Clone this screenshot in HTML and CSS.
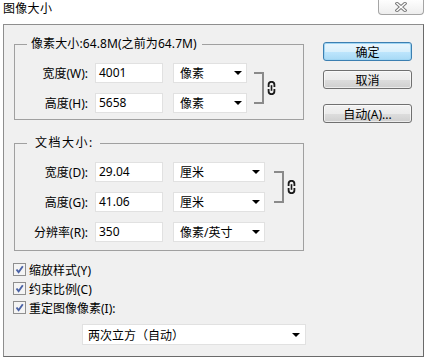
FILE: index.html
```html
<!DOCTYPE html>
<html lang="zh-CN">
<head>
  <meta charset="UTF-8">
  <title>图像大小</title>
  <link rel="stylesheet" href="styles.css">
</head>
<body>
  <div class="dialog">
    <div class="titlebar">
      <span class="title">图像大小</span>
      <span class="close">
        <svg width="12" height="10" viewBox="0 0 12 10">
          <path d="M2 1.5 L10 8.5 M10 1.5 L2 8.5" stroke="#7b7b7b" stroke-width="3.4" stroke-linecap="square"/>
          <path d="M2 1.5 L10 8.5 M10 1.5 L2 8.5" stroke="#fff" stroke-width="1.4" stroke-linecap="square"/>
        </svg>
      </span>
    </div>

    <div class="panel">
      <div class="main">
        <fieldset class="group">
          <legend>像素大小:64.8M(之前为64.7M)</legend>
          <div class="linked">
            <div class="rows">
              <div class="row">
                <label class="lbl">宽度(W):</label>
                <div class="input">4001</div>
                <div class="select">像素<i class="arrow"></i></div>
              </div>
              <div class="row">
                <label class="lbl">高度(H):</label>
                <div class="input">5658</div>
                <div class="select">像素<i class="arrow"></i></div>
              </div>
            </div>
            <div class="bracket"></div>
            <svg class="chain" width="9" height="14" viewBox="0 0 9 14">
              <path d="M1.6 6 V3.7 a2.9 2.9 0 0 1 5.8 0 V6" fill="none" stroke="#1a1a1a" stroke-width="1.8"/>
              <path d="M1.6 8 V10.3 a2.9 2.9 0 0 0 5.8 0 V8" fill="none" stroke="#1a1a1a" stroke-width="1.8"/>
              <path d="M4.5 4.2 V9.8" stroke="#1a1a1a" stroke-width="1.6"/>
            </svg>
          </div>
        </fieldset>

        <fieldset class="group group-doc">
          <legend>文档大小:</legend>
          <div class="linked">
            <div class="rows">
              <div class="row">
                <label class="lbl">宽度(D):</label>
                <div class="input">29.04</div>
                <div class="select">厘米<i class="arrow"></i></div>
              </div>
              <div class="row">
                <label class="lbl">高度(G):</label>
                <div class="input">41.06</div>
                <div class="select">厘米<i class="arrow"></i></div>
              </div>
            </div>
            <div class="bracket"></div>
            <svg class="chain" width="9" height="14" viewBox="0 0 9 14">
              <path d="M1.6 6 V3.7 a2.9 2.9 0 0 1 5.8 0 V6" fill="none" stroke="#1a1a1a" stroke-width="1.8"/>
              <path d="M1.6 8 V10.3 a2.9 2.9 0 0 0 5.8 0 V8" fill="none" stroke="#1a1a1a" stroke-width="1.8"/>
              <path d="M4.5 4.2 V9.8" stroke="#1a1a1a" stroke-width="1.6"/>
            </svg>
          </div>
          <div class="row row-res">
            <label class="lbl">分辨率(R):</label>
            <div class="input">350</div>
            <div class="select">像素/英寸<i class="arrow"></i></div>
          </div>
        </fieldset>

        <div class="checks">
          <div class="check"><span class="box"></span>缩放样式(Y)</div>
          <div class="check"><span class="box"></span>约束比例(C)</div>
          <div class="check"><span class="box"></span>重定图像像素(I):</div>
        </div>

        <div class="select select-wide">两次立方（自动）<i class="arrow"></i></div>
      </div>

      <div class="buttons">
        <button class="btn btn-default">确定</button>
        <button class="btn">取消</button>
        <button class="btn btn-auto">自动(A)...</button>
      </div>
    </div>
  </div>
</body>
</html>
```

FILE: styles.css
```css
* {
  box-sizing: border-box;
}
body {
  margin: 0;
  background: #fff;
  font-family: "Noto Sans", "Noto Sans CJK SC", sans-serif;
  font-size: 12px;
  color: #000;
}
.dialog {
  width: 427px;
  height: 359px;
}

/* title bar */
.titlebar {
  height: 24px;
  display: flex;
  justify-content: space-between;
  align-items: flex-start;
}
.title {
  padding: 1px 0 0 3px;
  line-height: 16px;
  letter-spacing: 0.3px;
}
.close {
  width: 46px;
  height: 15px;
  margin-right: 3px;
  border: 1px solid #a5a5a5;
  border-top: none;
  border-radius: 0 0 4px 4px;
  background: linear-gradient(#fefefe, #eeeeee);
  display: flex;
  align-items: center;
  justify-content: center;
}

/* body of the dialog */
.panel {
  margin: 0 3px;
  height: 333px;
  border: 1px solid #8e8e8e;
  border-right-color: #6a6a6a;
  border-bottom-color: #6a6a6a;
  background: #f0f0f0;
  display: flex;
  padding: 12px 0 0 10px;
}
.main {
  width: 290px;
}

.group {
  margin: 0;
  width: 290px;
  padding: 12px 0 6px 0;
  border: 1px solid #a0a0a0;
}
.group legend {
  margin-left: 12px;
  padding: 0 5px 0 4px;
  line-height: 14px;
  letter-spacing: 0.1px;
}
.group-doc {
  margin-top: 16px;
  padding-bottom: 8px;
}
.group-doc legend {
  padding: 0 6px 0 8px;
  letter-spacing: 1.5px;
}

.linked {
  display: flex;
  align-items: center;
}
.rows {
  display: flex;
  flex-direction: column;
  gap: 10px;
}
.row {
  display: flex;
  align-items: center;
  height: 20px;
}
.row-res {
  margin-top: 10px;
}
.lbl {
  width: 80px;
  text-align: right;
  padding-right: 7px;
}
.input {
  width: 68px;
  height: 20px;
  background: #fff;
  border: 1px solid #e1e1e1;
  padding-left: 3px;
  line-height: 18px;
}
.select {
  margin-left: 10px;
  width: 74px;
  height: 20px;
  background: #fff;
  border: 1px solid #e1e1e1;
  display: flex;
  align-items: center;
  justify-content: space-between;
  padding: 0 4px 0 6px;
}
.group-doc .select {
  width: 92px;
}
.arrow {
  width: 0;
  height: 0;
  border-top: 4px solid #000;
  border-left: 4px solid transparent;
  border-right: 4px solid transparent;
}
.bracket {
  width: 10px;
  height: 32px;
  margin-left: 7px;
  border: 2px solid #8a8a8a;
  border-left: none;
}
.group-doc .bracket {
  margin-left: 9px;
}
.chain {
  margin-left: 3px;
}

/* checkboxes */
.checks {
  margin-top: 12px;
  display: flex;
  flex-direction: column;
  gap: 6px;
}
.check {
  display: flex;
  align-items: center;
  gap: 3px;
  height: 13px;
  margin-left: -1px;
}
.box {
  width: 13px;
  height: 13px;
  border: 1px solid #8f8f8f;
  background: #f4f4f4 url("data:image/svg+xml,%3Csvg xmlns='http://www.w3.org/2000/svg' width='11' height='11'%3E%3Cpath d='M2.5 5.5 L4.6 8.2 L8.8 2.2' fill='none' stroke='%234a62a6' stroke-width='1.9'/%3E%3C/svg%3E") no-repeat center;
}

.select-wide {
  margin: 10px 0 0 68px;
  width: 224px;
  height: 21px;
  padding: 0 5px 0 5px;
}

/* buttons */
.buttons {
  margin: 5px 0 0 19px;
  display: flex;
  flex-direction: column;
  width: 89px;
}
.btn {
  height: 19px;
  padding: 0;
  font-family: inherit;
  font-size: 12px;
  color: #000;
  border: 1px solid #707070;
  border-radius: 3px;
  background: linear-gradient(#f2f2f2 0%, #ebebeb 50%, #dddddd 51%, #cfcfcf 100%);
  box-shadow: inset 0 0 0 1px rgba(255, 255, 255, 0.6);
  margin-bottom: 9px;
}
.btn-default {
  border-color: #3c7fb1;
  background: linear-gradient(#eaf6fd 0%, #d9f0fc 50%, #bee6fd 51%, #a7d9f5 100%);
  box-shadow: inset 0 0 0 1px #9fd5f3;
}
.btn-auto {
  margin-top: 6px;
}
```
